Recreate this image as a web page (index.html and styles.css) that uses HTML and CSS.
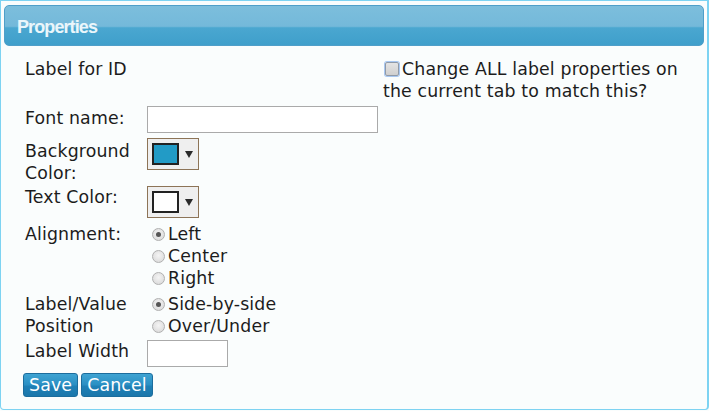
FILE: index.html
```html
<!DOCTYPE html>
<html>
<head>
<meta charset="utf-8">
<link rel="stylesheet" href="styles.css">
</head>
<body>
<div class="panel">
  <div class="header"><h1 class="title">Properties</h1></div>
  <div class="form">
    <div class="lbl row1">Label for ID</div>
    <div class="spacer row1"></div>
    <div class="all row1"><span class="check"></span>Change ALL label properties on the current tab to match this?</div>

    <div class="lbl row2">Font name:</div>
    <div class="val row2"><span class="input wide"></span></div>

    <div class="lbl row3">Background Color:</div>
    <div class="val row3"><span class="picker"><span class="swatch blue"></span><span class="arrow"></span></span></div>

    <div class="lbl row4">Text Color:</div>
    <div class="val row4"><span class="picker"><span class="swatch white"></span><span class="arrow"></span></span></div>

    <div class="lbl row5">Alignment:</div>
    <div class="val row5 radios">
      <div class="opt"><span class="radio on"></span>Left</div>
      <div class="opt"><span class="radio"></span>Center</div>
      <div class="opt"><span class="radio"></span>Right</div>
    </div>

    <div class="lbl row6">Label/Value Position</div>
    <div class="val row6 radios">
      <div class="opt"><span class="radio on"></span>Side-by-side</div>
      <div class="opt"><span class="radio"></span>Over/Under</div>
    </div>

    <div class="lbl row7">Label Width</div>
    <div class="val row7"><span class="input narrow"></span></div>

    <div class="buttons">
      <button class="btn">Save</button><button class="btn">Cancel</button>
    </div>
  </div>
</div>
</body>
</html>
```

FILE: styles.css
```css
html, body {
  margin: 0;
  padding: 0;
  background: #fafdfd;
}
body {
  font-family: "DejaVu Sans", Verdana, sans-serif;
  font-size: 17.33px;
  line-height: 22px;
  letter-spacing: 0.15px;
  color: #1c1c1c;
}
.panel {
  box-sizing: border-box;
  width: 709px;
  height: 410px;
  border: 1px solid #7dd3f2;
  border-right-width: 2px;
  border-radius: 0 0 4px 4px;
  padding: 4px 3px 0 3px;
}
.header {
  height: 41px;
  box-sizing: border-box;
  border: 1px solid #4f9fc9;
  border-radius: 5px;
  background: linear-gradient(to bottom, #7cbedc 0%, #74b9da 52%, #4aa7d0 56%, #3f9fcb 100%);
  display: flex;
  align-items: center;
  padding-left: 12px;
}
.title {
  margin: 0;
  font-family: "Liberation Sans", Arial, sans-serif;
  font-weight: bold;
  font-size: 18px;
  letter-spacing: -0.9px;
  color: #eaf6fb;
  line-height: 20px;
  padding-top: 3px;
}
.form {
  display: grid;
  grid-template-columns: 122px 236px 310px;
  row-gap: 2px;
  padding: 12px 0 0 21px;
  align-items: start;
}
.val { grid-column: 2 / span 2; }
.all { position: relative; }
.check {
  display: inline-block;
  box-sizing: border-box;
  width: 14px;
  height: 14px;
  margin: 0 3px 0 2px;
  vertical-align: -1px;
  border: 1px solid #8f9aa8;
  border-radius: 2px;
  background: linear-gradient(#e4e4e4, #cfcfcf);
  box-shadow: 0 0 0 1px #a9c8f2;
}
.row2.lbl { margin-top: 3px; }
.row2.val { margin-top: 2px; }
.row3.lbl { margin-top: 5px; }
.row3.val { margin-top: 3px; }
.row5 { margin-top: 3px; }
.row6 { margin-top: 2px; }
.row7.val { margin-top: 1px; }
.row7.lbl { margin-top: 1px; }
.input {
  display: block;
  box-sizing: border-box;
  height: 27px;
  border: 1px solid #aaaaaa;
  background: #fff;
}
.wide { width: 231px; }
.narrow { width: 81px; }
.picker {
  display: flex;
  align-items: center;
  box-sizing: border-box;
  width: 52px;
  height: 32px;
  border: 1px solid #8d7457;
  background: #efefef;
  padding-left: 4px;
}
.swatch {
  box-sizing: border-box;
  width: 27px;
  height: 22px;
  border: 2px solid #222;
}
.swatch.blue { background: #229bc6; }
.swatch.white { background: #ffffff; }
.arrow {
  margin-left: 6px;
  width: 0;
  height: 0;
  border-left: 4px solid transparent;
  border-right: 4px solid transparent;
  border-top: 7px solid #2a2a2a;
}
.opt {
  display: flex;
  align-items: center;
}
.radio {
  box-sizing: border-box;
  width: 13px;
  height: 13px;
  margin: 0 3px 0 5px;
  border-radius: 50%;
  border: 1px solid #b0b0b0;
  background: radial-gradient(circle at 50% 40%, #f4f4f4, #d6d6d6);
  position: relative;
}
.radio.on::after {
  content: "";
  position: absolute;
  left: 3px;
  top: 3px;
  width: 5px;
  height: 5px;
  border-radius: 50%;
  background: #555;
}
.buttons {
  grid-column: 1 / span 3;
  margin: 4px 0 0 -2px;
  display: flex;
  gap: 3px;
}
.btn {
  font-family: "DejaVu Sans", Verdana, sans-serif;
  font-size: 17.33px;
  letter-spacing: 0.15px;
  line-height: 20px;
  height: 24px;
  padding: 0 5px;
  border: 1px solid #1c6d9d;
  border-radius: 3px;
  color: #fff;
  background: linear-gradient(to bottom, #3ea3d2 0%, #2a8fc3 50%, #1f80b6 55%, #1b77ab 100%);
}
```
